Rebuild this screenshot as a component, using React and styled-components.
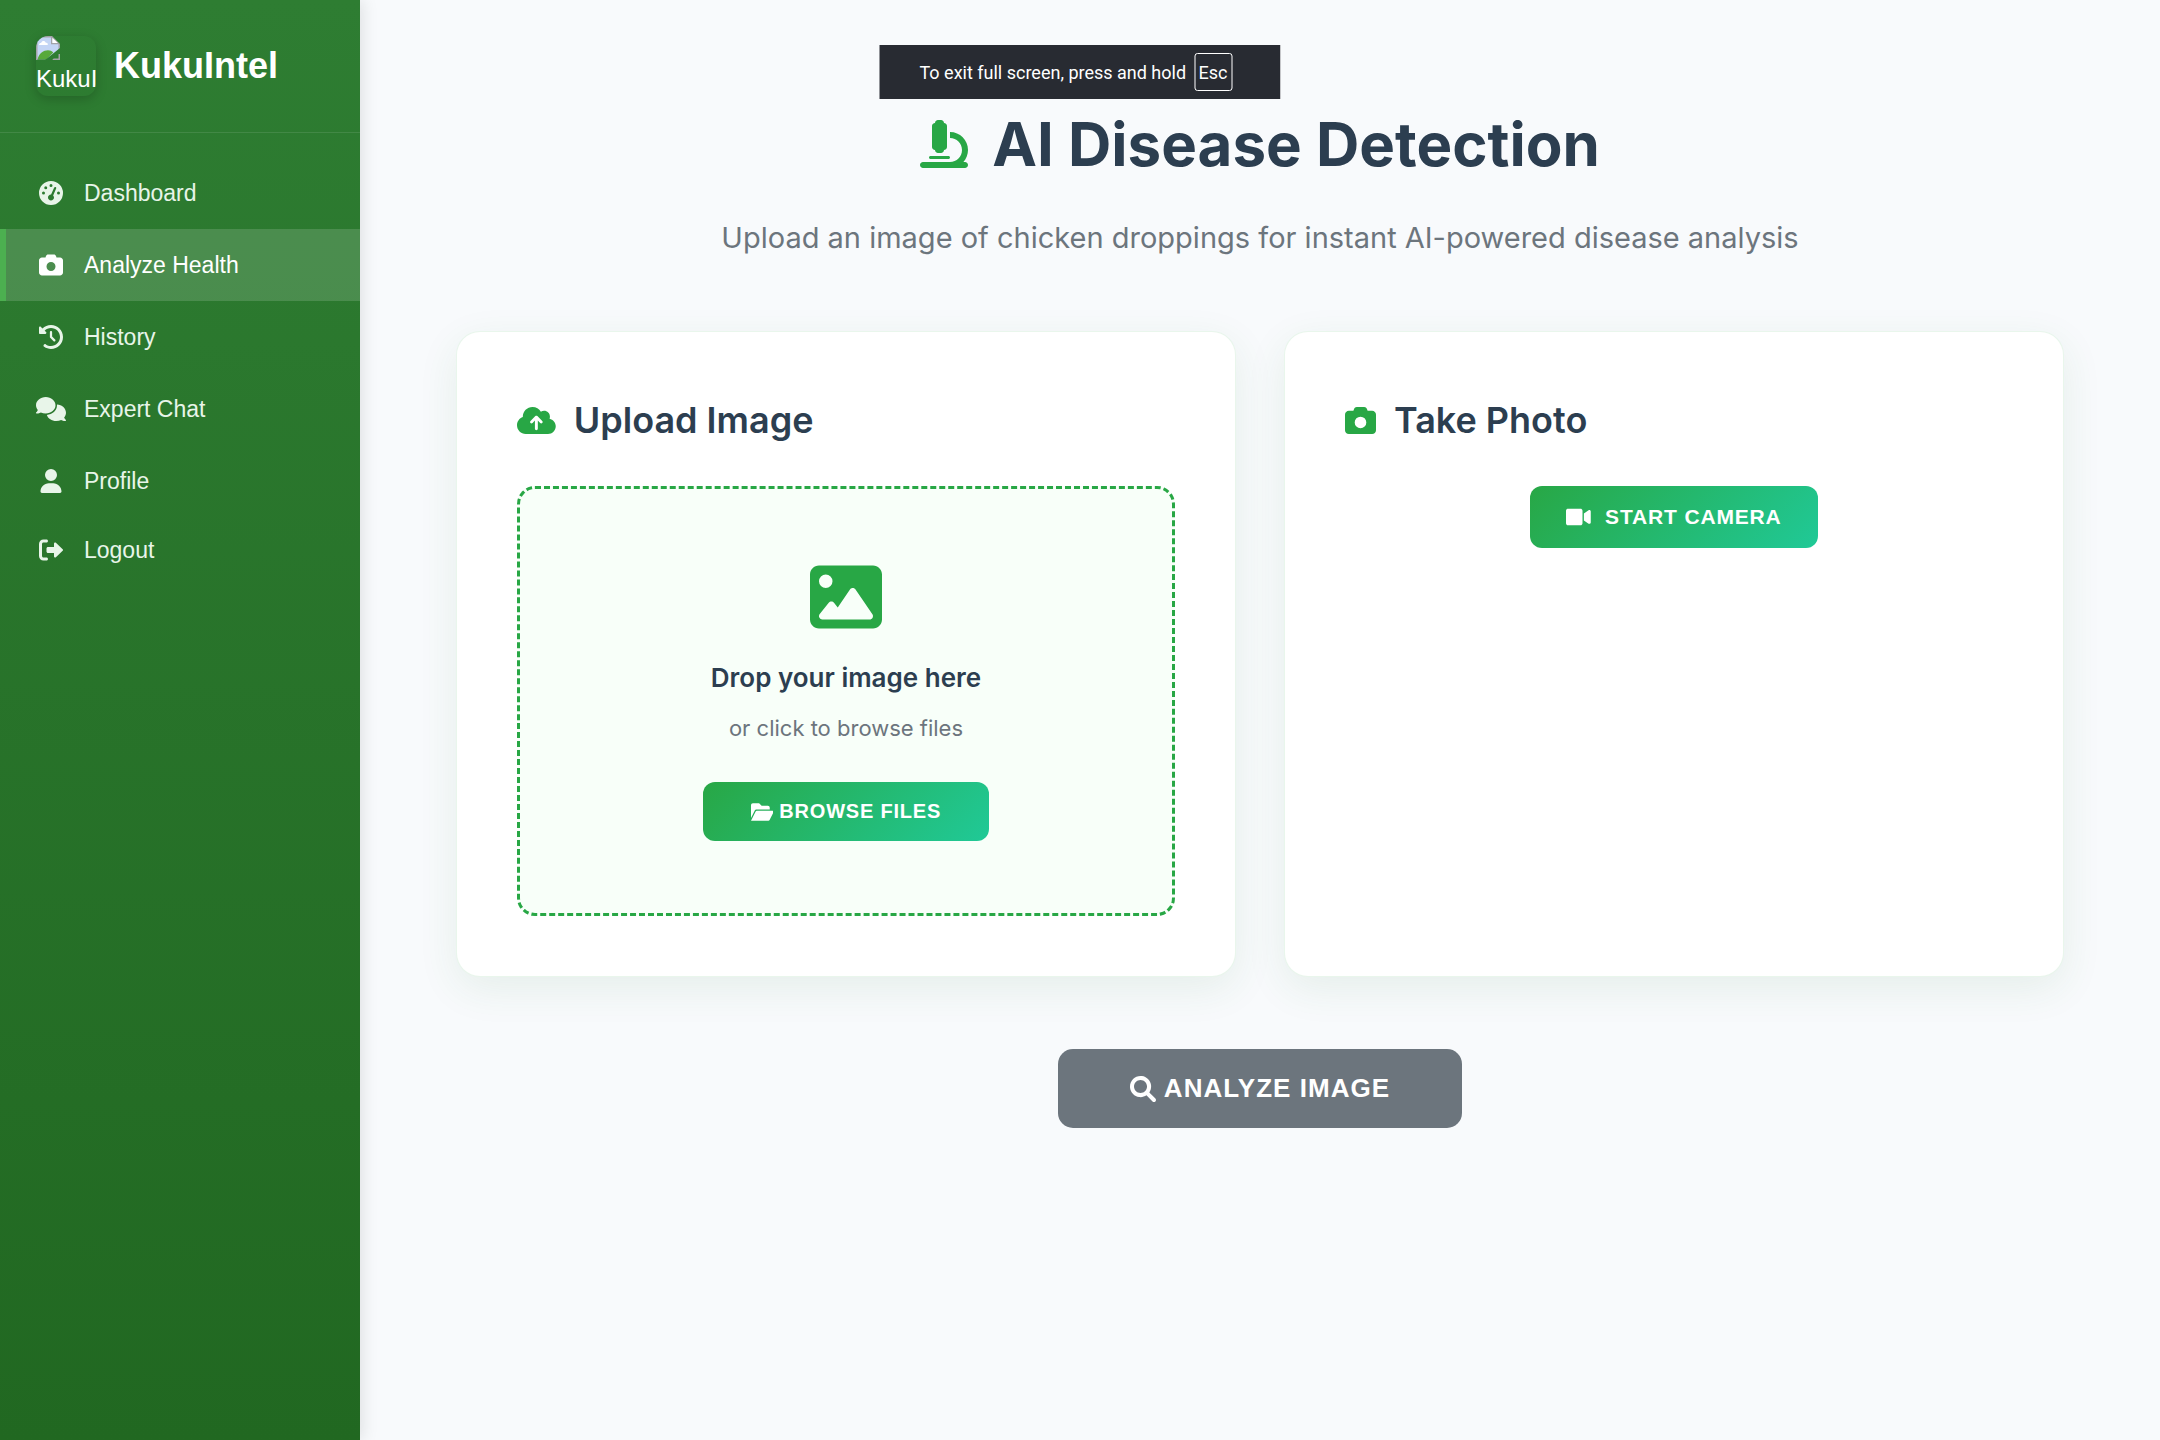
import React, { useRef } from "react";
import styled, { createGlobalStyle } from "styled-components";
import {
  FaGaugeHigh, FaCamera, FaComments, FaUser, FaMicroscope, FaCloudArrowUp, FaImage,
} from "react-icons/fa6";

const sans = `"Liberation Sans", Arial, sans-serif`;
const inter = `Inter, "Liberation Sans", sans-serif`;

const GlobalStyle = createGlobalStyle`
  *, *::before, *::after { box-sizing: border-box; }
  body { margin: 0; background: #f8fafc; font-family: ${inter}; color: #2c3e50; }
  h1, h2, h3, p, ul { margin: 0; padding: 0; }
  svg { display: block; flex: none; height: 1em; }
`;

const Layout = styled.div`
  display: flex;
  min-height: 100vh;
`;

const Sidebar = styled.aside`
  flex: none;
  width: 360px;
  color: #ffffff;
  font-family: ${sans};
  background: linear-gradient(180deg, #2e7d32 0%, #216821 100%);
  box-shadow: 3px 0 15px rgba(0, 0, 0, 0.1);
`;

const Brand = styled.div`
  display: flex;
  align-items: center;
  gap: 18px;
  padding: 36px;
  border-bottom: 1px solid rgba(255, 255, 255, 0.1);
`;

const Logo = styled.div`
  width: 60px;
  height: 60px;
  overflow: hidden;
  border-radius: 12px;
  box-shadow: 0 3px 12px rgba(0, 0, 0, 0.2);
  font-size: 24px;
  line-height: 37px;
`;

const BrandName = styled.span`
  font-size: 36px;
  font-weight: 700;
  line-height: 54px;
`;

const NavList = styled.ul`
  list-style: none;
  padding: 24px 0;
`;

const NavLink = styled.a`
  display: flex;
  align-items: center;
  gap: 18px;
  height: ${(p) => (p.$compact ? 66 : 72)}px;
  padding: 0 36px 0 30px;
  border-left: 6px solid ${(p) => (p.$active ? "#4caf50" : "transparent")};
  background: ${(p) => (p.$active ? "rgba(255, 255, 255, 0.15)" : "none")};
  background-clip: padding-box;
  color: ${(p) => (p.$active ? "#ffffff" : "#e8f5e9")};
  font-size: 23px;
  text-decoration: none;
`;

const NavIcon = styled.span`
  display: flex;
  justify-content: center;
  width: 30px;
  font-size: 24px;
`;

const Main = styled.main`
  flex: 1;
  min-width: 0;
  padding: 96px;
`;

const Header = styled.header`
  margin-bottom: 72px;
  text-align: center;
`;

const Title = styled.h1`
  display: flex;
  align-items: center;
  justify-content: center;
  gap: 24px;
  margin-bottom: 24px;
  font-size: 60px;
  font-weight: 700;
  line-height: 96px;

  svg { color: #28a745; font-size: 48px; }
`;

const Subtitle = styled.p`
  color: #6c757d;
  font-size: 29px;
  line-height: 43px;
`;

const Cards = styled.div`
  display: grid;
  grid-template-columns: 1fr 1fr;
  gap: 48px;
  margin-bottom: 72px;
`;

const Card = styled.section`
  padding: 60px;
  background: #ffffff;
  border: 1px solid rgba(40, 167, 69, 0.1);
  border-radius: 24px;
  box-shadow: 0 12px 40px rgba(46, 125, 50, 0.09);
`;

const CardTitle = styled.h2`
  display: flex;
  align-items: center;
  gap: 18px;
  margin-bottom: 38px;
  font-size: 36px;
  font-weight: 600;
  line-height: 56px;

  svg { color: #28a745; font-size: 31px; }
`;

const CloudIcon = styled(FaCloudArrowUp)`
  width: 1.25em;
`;

const ChatIcon = styled(FaComments)`
  width: 1.25em;
`;

const DropZone = styled.div`
  display: flex;
  flex-direction: column;
  align-items: center;
  padding: 72px;
  border: 3px dashed #28a745;
  border-radius: 18px;
  background: #f8fff9;

  > svg { color: #28a745; font-size: 72px; }
`;

const DropTitle = styled.h3`
  margin: 24px 0 12px;
  font-size: 26px;
  font-weight: 600;
  line-height: 42px;
`;

const DropHint = styled.p`
  margin-bottom: 36px;
  color: #6c757d;
  font-size: 22px;
  line-height: 35px;
`;

const Button = styled.button`
  display: flex;
  align-items: center;
  justify-content: center;
  border: 0;
  color: #ffffff;
  font-family: ${sans};
  font-weight: 700;
  text-transform: uppercase;
  letter-spacing: 0.04em;
  cursor: pointer;
`;

const BrowseButton = styled(Button)`
  gap: 6px;
  height: 59px;
  padding: 0 48px;
  border-radius: 12px;
  background: linear-gradient(135deg, #28a745, #20c997);
  font-size: 20px;
`;

const CameraButton = styled(Button)`
  gap: 14px;
  height: 62px;
  margin: 0 auto;
  padding: 0 36px;
  border-radius: 12px;
  background: linear-gradient(135deg, #28a745, #20c997);
  font-size: 21px;

  svg { font-size: 22px; }
`;

const AnalyzeButton = styled(Button)`
  gap: 8px;
  height: 79px;
  margin: 0 auto;
  padding: 0 72px;
  border-radius: 15px;
  background: #6c757d;
  font-size: 26px;
`;

const FullscreenNotice = styled.div`
  position: fixed;
  top: 45px;
  left: 50%;
  display: flex;
  align-items: center;
  gap: 8px;
  width: 401px;
  height: 54px;
  padding-left: 40px;
  transform: translateX(-50%);
  background: #282b32;
  color: #ffffff;
  font-family: Roboto, "Open Sans", sans-serif;
  font-size: 18px;
  white-space: nowrap;
`;

const Key = styled.kbd`
  display: grid;
  place-items: center;
  width: 38px;
  height: 38px;
  border: 1px solid #ffffff;
  border-radius: 3px;
  font: inherit;
`;

function Glyph({ width = 512, d }) {
  return (
    <svg viewBox={`0 0 ${width} 512`} fill="currentColor" aria-hidden="true">
      <path d={d} />
    </svg>
  );
}

const HistoryIcon = () => (
  <Glyph d="M256 0C397.4 0 512 114.6 512 256C512 397.4 397.4 512 256 512C201.7 512 151.2 495 109.7 466.1C95.2 455.1 91.64 436 101.8 421.5C111.9 407 131.8 403.5 146.3 413.6C177.4 435.3 215.2 448 256 448C362 448 448 362 448 256C448 149.1 362 64 256 64C202.1 64 155 85.46 120.2 120.2L151 151C166.1 166.1 155.4 192 134.1 192H24C10.75 192 0 181.3 0 168V57.94C0 36.56 25.85 25.85 40.97 40.97L74.98 74.98C121.3 28.69 185.3 0 255.1 0L256 0zM256 128C269.3 128 280 138.7 280 152V246.1L344.1 311C354.3 320.4 354.3 335.6 344.1 344.1C335.6 354.3 320.4 354.3 311 344.1L239 272.1C234.5 268.4 232 262.3 232 256V152C232 138.7 242.7 128 256 128V128z" />
);

const LogoutIcon = () => (
  <Glyph d="M96 480h64C177.7 480 192 465.7 192 448S177.7 416 160 416H96c-17.67 0-32-14.33-32-32V128c0-17.67 14.33-32 32-32h64C177.7 96 192 81.67 192 64S177.7 32 160 32H96C42.98 32 0 74.98 0 128v256C0 437 42.98 480 96 480zM504.8 238.5l-144.1-136c-6.975-6.578-17.2-8.375-26-4.594C325.9 101.7 320.2 110.3 320.2 119.9l-.0918 72H192C174.3 192 160 206.3 160 224v64c0 17.67 14.33 32 32 32h128.1l.0918 72c0 9.578 5.707 18.25 14.51 22.05c8.803 3.781 19.03 1.984 26-4.594l144.1-136C514.4 264.4 514.4 247.6 504.8 238.5z" />
);

const FolderIcon = () => (
  <Glyph width={576} d="M147.8 192H480V144C480 117.5 458.5 96 432 96h-160l-64-64h-160C21.49 32 0 53.49 0 80v328.4l90.54-181.1C101.4 205.6 123.4 192 147.8 192zM543.1 224H147.8C135.7 224 124.6 230.8 119.2 241.7L0 480h447.1c12.12 0 23.2-6.852 28.62-17.69l96-192C583.2 249 567.7 224 543.1 224z" />
);

const VideoIcon = () => (
  <Glyph width={576} d="M384 112v288c0 26.51-21.49 48-48 48h-288c-26.51 0-48-21.49-48-48v-288c0-26.51 21.49-48 48-48h288C362.5 64 384 85.49 384 112zM576 127.5v256.9c0 25.5-29.17 40.39-50.39 25.79L416 334.7V177.3l109.6-75.56C546.9 87.13 576 102.1 576 127.5z" />
);

const SearchIcon = () => (
  <Glyph d="M500.3 443.7l-119.7-119.7c27.22-40.41 40.65-90.9 33.46-144.7C401.8 87.79 326.8 13.32 235.2 1.723C99.01-15.51-15.51 99.01 1.724 235.2c11.6 91.64 86.08 166.7 177.6 178.9c53.8 7.189 104.3-6.236 144.7-33.46l119.7 119.7c15.62 15.62 40.95 15.62 56.57 0C515.9 484.7 515.9 459.3 500.3 443.7zM79.1 208c0-70.58 57.42-128 128-128s128 57.42 128 128c0 70.58-57.42 128-128 128S79.1 278.6 79.1 208z" />
);

function MissingImageIcon() {
  return (
    <svg viewBox="0 0 16 16" aria-hidden="true">
      <path d="M.5 15.5V.5h10l5 5v4l-6 6z" fill="#c4d5f5" />
      <path d="M2 6c0-1 1-1.500 1.500-1.500C4 3 6 3 6.500 4.500 8 4.300 8.300 6 7.500 6z" fill="#fff" />
      <path d="M1 15.500c1-4 4-6 7-6 1.500 0 2.500.5 3.500 1.500L7 15.500z" fill="#57a93b" />
      <path d="M.5 16V.5h10l5 5V10M10.500.5v4.500h5M11 15.500h4.500V12" fill="none" stroke="#a3a3a8" />
      <path d="M10.900 1.200v3.500h3.700z" fill="#fff" />
      <path d="M6 16l10-8v3l-5.500 5z" fill="#2e7d32" />
    </svg>
  );
}

const links = [
  { label: "Dashboard", icon: FaGaugeHigh },
  { label: "Analyze Health", icon: FaCamera, active: true },
  { label: "History", icon: HistoryIcon },
  { label: "Expert Chat", icon: ChatIcon },
  { label: "Profile", icon: FaUser },
  { label: "Logout", icon: LogoutIcon, compact: true },
];

export default function App() {
  const fileInput = useRef(null);
  return (
    <>
      <GlobalStyle />
      <Layout>
        <Sidebar>
          <Brand>
            <Logo><MissingImageIcon />KukuI</Logo>
            <BrandName>KukuIntel</BrandName>
          </Brand>
          <nav>
            <NavList>
              {links.map(({ label, icon: Icon, active, compact }) => (
                <li key={label}>
                  <NavLink href="#" $active={active} $compact={compact} aria-current={active ? "page" : undefined}>
                    <NavIcon><Icon /></NavIcon>
                    {label}
                  </NavLink>
                </li>
              ))}
            </NavList>
          </nav>
        </Sidebar>
        <Main>
          <Header>
            <Title><FaMicroscope />AI Disease Detection</Title>
            <Subtitle>Upload an image of chicken droppings for instant AI-powered disease analysis</Subtitle>
          </Header>
          <Cards>
            <Card>
              <CardTitle><CloudIcon />Upload Image</CardTitle>
              <DropZone>
                <FaImage />
                <DropTitle>Drop your image here</DropTitle>
                <DropHint>or click to browse files</DropHint>
                <input ref={fileInput} type="file" accept="image/*" aria-label="Image file" hidden />
                <BrowseButton type="button" onClick={() => fileInput.current.click()}>
                  <FolderIcon />Browse Files
                </BrowseButton>
              </DropZone>
            </Card>
            <Card>
              <CardTitle><FaCamera />Take Photo</CardTitle>
              <CameraButton type="button"><VideoIcon />Start Camera</CameraButton>
            </Card>
          </Cards>
          <AnalyzeButton type="button" disabled><SearchIcon />Analyze Image</AnalyzeButton>
        </Main>
      </Layout>
      <FullscreenNotice>To exit full screen, press and hold <Key>Esc</Key></FullscreenNotice>
    </>
  );
}
